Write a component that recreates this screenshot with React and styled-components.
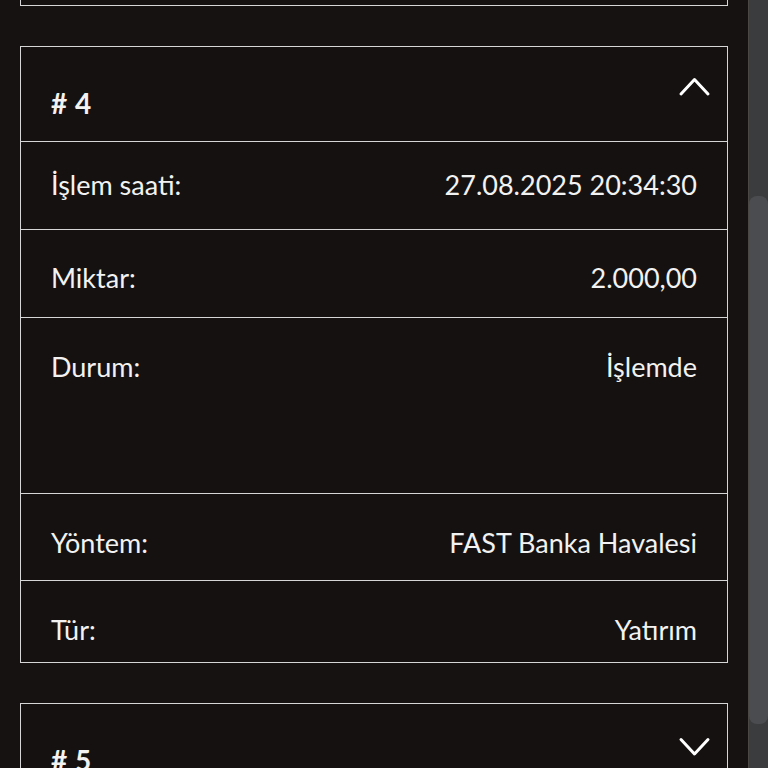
import React from "react";
import styled, { createGlobalStyle } from "styled-components";

const Global = createGlobalStyle`
  html, body { margin: 0; padding: 0; background: #151211; }
  body { font-family: Lato, "Noto Sans", sans-serif; color: #f2f2f2; overflow: hidden; }
`;

const Page = styled.div`
  display: flex;
  height: 768px;
  overflow: hidden;
`;

const Main = styled.main`
  width: 748px;
  padding: 0 20px;
  box-sizing: border-box;
  display: flex;
  flex-direction: column;
  gap: 40px;
`;

const Track = styled.div`
  width: 20px;
  background: #3b3c3e;
  border-left: 1px solid #4a4744;
  box-sizing: border-box;
  display: flex;
  flex-direction: column;
`;

const Thumb = styled.div`
  margin-top: 196px;
  height: 528px;
  background: #4b4c4f;
  border-radius: 8px;
`;

const Card = styled.section`
  border: 1.5px solid #d6d6d6;
  background: #141110;
  flex-shrink: 0;
  ${(p) => (p.$stub ? "border-top: none; height: 5px;" : "")}
`;

const Header = styled.div`
  height: 94px;
  display: flex;
  justify-content: space-between;
  align-items: flex-start;
  padding: 0 16px 0 30px;
  box-sizing: border-box;
`;

const Title = styled.h3`
  margin: 40px 0 0;
  font-size: 28px;
  font-weight: 700;
  letter-spacing: 0.5px;
  line-height: 32px;
`;

const Chevron = styled.svg`
  margin-top: ${(p) => (p.$up ? 30 : 33)}px;
  width: 33px;
  height: 20px;
`;

const Row = styled.div`
  border-top: 1.5px solid #d6d6d6;
  height: ${(p) => p.$h}px;
  box-sizing: border-box;
  display: flex;
  justify-content: space-between;
  align-items: flex-start;
  padding: ${(p) => p.$pt}px 30px 0;
  font-size: 27px;
  line-height: 30px;
`;

const Label = styled.span``;
const Value = styled.span``;

function ChevronIcon({ up }) {
  return (
    <Chevron $up={up} viewBox="0 0 33 20" fill="none">
      <path
        d={up ? "M3 17 L16.5 2.5 L30 17" : "M3 2.5 L16.5 17 L30 2.5"}
        stroke="#fff"
        strokeWidth="3"
        strokeLinecap="round"
        strokeLinejoin="round"
      />
    </Chevron>
  );
}

const rows = [
  { label: "İşlem saati:", value: "27.08.2025 20:34:30", h: 88, pt: 28 },
  { label: "Miktar:", value: "2.000,00", h: 88, pt: 33 },
  { label: "Durum:", value: "İşlemde", h: 176, pt: 34 },
  { label: "Yöntem:", value: "FAST Banka Havalesi", h: 87, pt: 34 },
  { label: "Tür:", value: "Yatırım", h: 82, pt: 34 },
];

export default function App() {
  return (
    <Page>
      <Global />
      <Main>
        <Card $stub />
        <Card>
          <Header>
            <Title># 4</Title>
            <ChevronIcon up />
          </Header>
          {rows.map((r) => (
            <Row key={r.label} $h={r.h} $pt={r.pt}>
              <Label>{r.label}</Label>
              <Value>{r.value}</Value>
            </Row>
          ))}
        </Card>
        <Card>
          <Header>
            <Title># 5</Title>
            <ChevronIcon />
          </Header>
        </Card>
      </Main>
      <Track>
        <Thumb />
      </Track>
    </Page>
  );
}
